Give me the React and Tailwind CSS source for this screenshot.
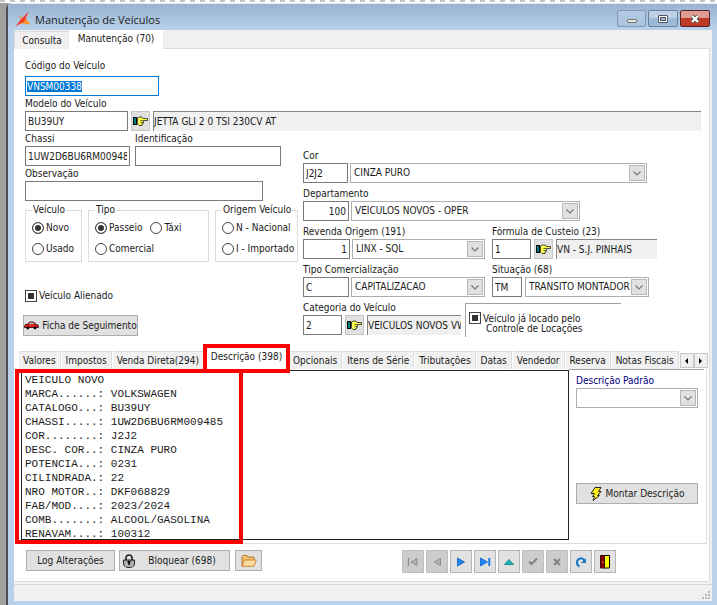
import React from 'react';

const notes = `VEICULO NOVO
MARCA......: VOLKSWAGEN
CATALOGO...: BU39UY
CHASSI.....: 1UW2D6BU6RM009485
COR........: J2J2
DESC. COR..: CINZA PURO
POTENCIA...: 0231
CILINDRADA.: 22
NRO MOTOR..: DKF068829
FAB/MOD....: 2023/2024
COMB.......: ALCOOL/GASOLINA
RENAVAM....: 100312`;

const tabs = [
  'Valores',
  'Impostos',
  'Venda Direta(294)',
  'Descrição (398)',
  'Opcionais',
  'Itens de Série',
  'Tributações',
  'Datas',
  'Vendedor',
  'Reserva',
  'Notas Fiscais',
];

function Field({ id, label, children, className = '' }) {
  return (
    <div className={className}>
      <label htmlFor={id} className="block h-[15px] leading-[15px] whitespace-nowrap">
        {label}
      </label>
      <div className="flex">{children}</div>
    </div>
  );
}

function TextBox({ id, label, className = '', ...props }) {
  return (
    <input
      id={id}
      aria-label={label}
      type="text"
      className={`h-5 shrink-0 border border-[#7a7a7a] bg-white px-0.5 outline-none ${className}`}
      {...props}
    />
  );
}

function ReadOnly({ label, value, className = '' }) {
  return (
    <input
      aria-label={label}
      readOnly
      defaultValue={value}
      className={`h-5 min-w-0 border-t border-l border-[#858585] bg-[#f0f0f0] outline-none ${className}`}
    />
  );
}

function Combo({ id, label, value, className = '' }) {
  return (
    <div className={`relative h-5 shrink-0 ${className}`}>
      <select
        id={id}
        aria-label={label}
        className="h-5 w-full appearance-none border border-[#adadb3] bg-white pr-4 pl-[3px] outline-none"
      >
        <option>{value}</option>
      </select>
      <span className="pointer-events-none absolute top-0.5 right-0.5 flex h-4 w-4 items-center justify-center border border-[#b8b8b8] bg-[#e1e1e1]">
        <svg width="8" height="5" viewBox="0 0 8 5" fill="none" stroke="#777" strokeWidth="1.2">
          <path d="M0.5 0.5 L4 4 L7.5 0.5" />
        </svg>
      </span>
    </div>
  );
}

function HandButton({ label }) {
  return (
    <button
      aria-label={label}
      className="mx-[3px] flex h-5 w-[19px] shrink-0 items-center justify-center border border-[#c4c4c4] bg-[#e1e1e1]"
    >
      <svg width="15" height="10" viewBox="0 0 15 10">
        <rect x="0" y="1" width="4" height="8" fill="#000" />
        <rect x="1" y="2" width="2" height="6" fill="#008080" />
        <path
          d="M4.5 2 L6.5 1 H9 L10 2.5 H14.5 V4.5 H10.5 V6.5 H10 V8 H9 V9.5 H6 L4.5 8 Z"
          fill="#ffff50"
          stroke="#222"
          strokeWidth="0.8"
        />
        <path d="M7.5 4.5 H10 M7.5 6.5 H10" stroke="#222" strokeWidth="0.7" />
      </svg>
    </button>
  );
}

function Radio({ name, label, checked }) {
  return (
    <label className="flex h-[15px] items-center gap-0.5 whitespace-nowrap">
      <input
        type="radio"
        name={name}
        defaultChecked={checked}
        className="h-3 w-3 shrink-0 appearance-none rounded-full border border-[#444] bg-white checked:bg-[#333] checked:shadow-[inset_0_0_0_2px_#fff]"
      />
      {label}
    </label>
  );
}

function Group({ title, className = '', children }) {
  return (
    <fieldset className={`h-[58px] min-w-0 shrink-0 border border-[#dcdcdc] pl-1.5 ${className}`}>
      <legend className="h-3 px-px leading-3 whitespace-nowrap">{title}</legend>
      <div className="mt-1 flex flex-col gap-1.5">{children}</div>
    </fieldset>
  );
}

function TriState({ id }) {
  return (
    <input
      id={id}
      type="checkbox"
      className="h-3 w-3 shrink-0 appearance-none border border-[#444] bg-[#333] shadow-[inset_0_0_0_2px_#fff]"
    />
  );
}

function NavButton({ label, disabled, children }) {
  return (
    <button
      aria-label={label}
      disabled={disabled}
      className="flex h-[23px] w-[22px] items-center justify-center border border-[#b5b5b5] bg-[#e1e1e1] disabled:border-[#c0c0c0] disabled:bg-[#cccccc]"
    >
      <svg width="14" height="14" viewBox="0 0 14 14" fill="none">
        {children}
      </svg>
    </button>
  );
}

function TitleBar() {
  return (
    <header className="flex h-[26px] items-start bg-linear-to-b from-[#98b4d2] to-[#b9d1ea] pl-[7px] text-[#1e1e1e]">
      <svg width="16" height="16" viewBox="0 0 16 16" className="mt-[7px]">
        <path d="M4 4 L8 7.5 L10.5 7 L15.5 13.5 L8.5 12.5 L4.5 12.5 L6 9 Z" fill="#ff9428" />
        <path d="M13.5 0.5 L9.5 10.5 L6.5 12 L0.5 15.5 L5 9.5 Z" fill="#f53a2c" />
      </svg>
      <h1 className="mt-2 ml-1 flex-1 font-['Open_Sans',sans-serif] text-[11px] leading-4">Manutenção de Veículos</h1>
      <div className="mt-[6px] mr-[7px] flex gap-0.5">
        <button
          aria-label="Minimizar"
          className="flex h-[17px] w-[29px] items-center justify-center rounded-xs border border-[#8097b5] bg-linear-to-b from-[#b5cae2] to-[#a9c3df]"
        >
          <span className="mt-1 h-1 w-2.5 rounded-[1px] border border-[#777] bg-[#e8e8e0]" />
        </button>
        <button
          aria-label="Maximizar"
          className="flex h-[17px] w-[30px] items-center justify-center rounded-xs border border-[#6b7f9c] bg-linear-to-b from-[#bfd1e6] from-50% to-[#9db9d8] to-50%"
        >
          <span className="flex h-2 w-2.5 items-center justify-center rounded-[1px] border border-[#555] bg-white">
            <span className="h-1 w-1.5 border border-[#556] bg-[#9bb4d4]" />
          </span>
        </button>
        <button
          aria-label="Fechar"
          className="flex h-[17px] w-[30px] items-center justify-center rounded-xs border border-[#5a1f2a] bg-linear-to-b from-[#e09d92] from-50% to-[#bd3a26] to-50%"
        >
          <svg width="12" height="10" viewBox="0 0 12 10">
            <path d="M3 2 L9 8 M9 2 L3 8" stroke="#555" strokeWidth="4" />
            <path d="M3 2 L9 8 M9 2 L3 8" stroke="#fff" strokeWidth="2.2" />
          </svg>
        </button>
      </div>
    </header>
  );
}

function VehicleForm() {
  return (
    <section className="pr-2 pl-[11px]">
      <div className="pt-[9px]">
        <label htmlFor="codigo" className="block h-[18px] leading-[15px]">
          Código do Veículo
        </label>
        <input
          id="codigo"
          autoFocus
          onFocus={(e) => e.target.select()}
          defaultValue="VNSM00338"
          className="block h-5 w-[134px] border border-[#0078d7] bg-white px-px outline-none selection:bg-[#0078d7] selection:text-white"
        />
      </div>
      <Field id="modelo" label="Modelo do Veículo">
        <TextBox id="modelo" defaultValue="BU39UY" className="w-[103px]" />
        <HandButton label="Buscar modelo" />
        <ReadOnly label="Descrição do modelo" value="JETTA GLI 2 0 TSI 230CV AT" className="flex-1" />
      </Field>

      <div className="flex">
        <div className="w-[278px] shrink-0">
          <div className="flex gap-[5px]">
            <Field id="chassi" label="Chassi">
              <TextBox id="chassi" defaultValue="1UW2D6BU6RM009485" className="w-[105px]" />
            </Field>
            <Field id="ident" label="Identificação">
              <TextBox id="ident" className="w-[146px]" />
            </Field>
          </div>
          <Field id="obs" label="Observação">
            <TextBox id="obs" className="w-[238px]" />
          </Field>

          <div className="mt-[3px] flex gap-1.5">
            <Group title="Veículo" className="w-[57px]">
              <Radio name="veiculo" label="Novo" checked />
              <Radio name="veiculo" label="Usado" />
            </Group>
            <Group title="Tipo" className="w-[121px]">
              <div className="flex gap-2">
                <Radio name="tipo" label="Passeio" checked />
                <Radio name="tipo" label="Táxi" />
              </div>
              <Radio name="tipo" label="Comercial" />
            </Group>
            <Group title="Origem Veículo" className="w-[83px]">
              <Radio name="origem" label="N - Nacional" />
              <Radio name="origem" label="I - Importado" />
            </Group>
          </div>

          <div className="mt-[26px] flex h-[15px] items-center gap-0.5">
            <TriState id="alienado" />
            <label htmlFor="alienado">Veículo Alienado</label>
          </div>
          <button className="mt-3 -ml-0.5 flex h-[21px] w-[115px] items-center justify-center gap-[3px] border border-[#adadad] bg-[#e1e1e1] whitespace-nowrap">
            <svg width="15" height="9" viewBox="0 0 15 9">
              <path d="M0.5 5 L1.5 3.5 L4 3 L5.5 1 H9.5 L11.5 3 L14 4 L14.5 6.5 H0.5 Z" fill="#e02020" stroke="#300" strokeWidth="0.8" />
              <path d="M5 3 L6 1.7 H9 L10.3 3 Z" fill="#8fe0e8" />
              <circle cx="3.8" cy="6.8" r="1.6" fill="#111" />
              <circle cx="11" cy="6.8" r="1.6" fill="#111" />
            </svg>
            Ficha de Seguimento
          </button>
        </div>

        <div className="flex flex-1 flex-col gap-[3px] pt-[17px]">
          <Field id="cor" label="Cor">
            <TextBox id="cor" defaultValue="J2J2" className="mr-0.5 w-[45px]" />
            <Combo label="Descrição da cor" value="CINZA PURO" className="w-[297px]" />
          </Field>
          <Field id="depto" label="Departamento">
            <TextBox id="depto" defaultValue="100" className="mr-0.5 w-[46px] text-right" />
            <Combo label="Nome do departamento" value="VEÍCULOS NOVOS - OPER" className="w-[229px]" />
          </Field>
          <div className="flex gap-[7px]">
            <Field id="revenda" label="Revenda Origem (191)">
              <TextBox id="revenda" defaultValue="1" className="mr-0.5 w-[47px] text-right" />
              <Combo label="Nome da revenda" value="LINX - SQL" className="w-[133px]" />
            </Field>
            <Field id="formula" label="Fórmula de Custeio (23)">
              <TextBox id="formula" defaultValue="1" className="w-[39px]" />
              <HandButton label="Buscar fórmula" />
              <ReadOnly label="Nome da fórmula" value="VN - S.J. PINHAIS" className="w-[101px]" />
            </Field>
          </div>
          <div className="flex gap-[7px]">
            <Field id="comerc" label="Tipo Comercialização">
              <TextBox id="comerc" defaultValue="C" className="mr-0.5 w-[46px]" />
              <Combo label="Nome da comercialização" value="CAPITALIZACAO" className="w-[134px]" />
            </Field>
            <Field id="situacao" label="Situação (68)">
              <TextBox id="situacao" defaultValue="TM" className="mr-[3px] w-[30px]" />
              <Combo label="Nome da situação" value="TRANSITO MONTADOR" className="w-[124px]" />
            </Field>
          </div>
          <div className="flex gap-1">
            <Field id="categoria" label="Categoria do Veículo">
              <TextBox id="categoria" defaultValue="2" className="w-[39px]" />
              <HandButton label="Buscar categoria" />
              <ReadOnly label="Nome da categoria" value="VEICULOS NOVOS VW" className="w-[94px]" />
            </Field>
            <div className="mt-[3px] flex h-[34px] w-[156px] gap-0.5 border-t border-l border-[#a0a0a0] pt-2 pl-[3px]">
              <TriState id="locado" />
              <label htmlFor="locado" className="pt-0.5 leading-[10px] whitespace-nowrap">
                Veículo já locado pelo
                <span className="block pl-[3px]">Controle de Locações</span>
              </label>
            </div>
          </div>
        </div>
      </div>
    </section>
  );
}

function DetailTabs() {
  return (
    <section className="mt-[11px] pr-0.5 pl-[5px]">
      <div className="flex h-[21px] items-end gap-px" role="tablist">
        {tabs.map((tab) =>
          tab === 'Descrição (398)' ? (
            <button key={tab} role="tab" aria-selected="true" className="relative h-[21px] w-[83px] shrink-0 bg-white pb-1 whitespace-nowrap">
              {tab}
              <span className="pointer-events-none absolute -inset-x-0.5 -top-1 -bottom-1 z-20 border-4 border-[#ff0000]" />
            </button>
          ) : (
            <button
              key={tab}
              role="tab"
              className="h-[18px] shrink-0 border-t border-r border-[#dcdcdc] bg-[#f0f0f0] px-1 whitespace-nowrap"
            >
              {tab}
            </button>
          ),
        )}
        <div className="mb-px ml-auto flex">
          {['M5 1 L2 4 L5 7 Z', 'M2 1 L5 4 L2 7 Z'].map((d, i) => (
            <button
              key={d}
              aria-label={i ? 'Próxima aba' : 'Aba anterior'}
              className="flex h-[15px] w-[14px] items-center justify-center border border-[#c8c8c8] bg-[#f0f0f0]"
            >
              <svg width="7" height="8" viewBox="0 0 7 8">
                <path d={d} fill="#000" />
              </svg>
            </button>
          ))}
        </div>
      </div>

      <div className="relative flex border-r border-b border-[#dcdcdc] pr-0.5 pb-[3px] pl-0.5">
        <textarea
          aria-label="Descrição do veículo"
          defaultValue={notes}
          className="mt-px h-[170px] min-w-0 flex-1 resize-none overflow-hidden border border-[#222] bg-white pt-0.5 pl-[3px] font-['Liberation_Mono',monospace] text-[11px] leading-[14px] outline-none"
        />
        <span className="pointer-events-none absolute top-0 -left-1 z-10 h-[175px] w-[228px] border-4 border-[#ff0000]" />
        <div className="w-[135px] shrink-0 border-t border-[#a0a0a0] pt-[3px] pr-1.5 pl-[7px]">
          <label htmlFor="padrao" className="block h-[15px] leading-[15px] text-[#000080]">
            Descrição Padrão
          </label>
          <Combo id="padrao" value="" className="w-full" />
          <button className="mt-[75px] flex h-[21px] w-full items-center justify-center gap-1 border border-[#adadad] bg-[#e1e1e1] whitespace-nowrap">
            <svg width="12" height="14" viewBox="0 0 12 14">
              <path
                d="M5 0.5 H11 L8.5 4.5 H11 L7.5 8.5 H9.5 L3 13.5 L4.5 9.5 H2.5 L4.5 6.5 H1 Z"
                fill="#ffee20"
                stroke="#222"
                strokeWidth="1"
              />
            </svg>
            Montar Descrição
          </button>
        </div>
      </div>
    </section>
  );
}

function ActionBar() {
  return (
    <section className="flex items-start pt-[6px] pr-[93px] pb-2 pl-3">
      <button className="h-[21px] w-[89px] border border-[#adadad] bg-[#e1e1e1]">Log Alterações</button>
      <button className="ml-1 flex h-[21px] w-[111px] items-center border border-[#adadad] bg-[#e1e1e1] pl-[3px]">
        <svg width="12" height="14" viewBox="0 0 12 14">
          <path d="M3 6 V4 A3 3 0 0 1 9 4 V6" fill="none" stroke="#222" strokeWidth="1.6" />
          <path d="M0.5 6 H11.5 V10 C11.5 12 9 13.5 6 13.5 C3 13.5 0.5 12 0.5 10 Z" fill="#888" stroke="#222" />
          <path d="M1 8 H11 M1 10 H11 M2 12 H10" stroke="#eee" strokeWidth="0.8" />
          <path d="M6 7 V11 M4.5 8 H7.5" stroke="#000" strokeWidth="1.5" />
        </svg>
        <span className="flex-1 text-center whitespace-nowrap">Bloquear (698)</span>
      </button>
      <button
        aria-label="Abrir pasta"
        className="ml-[5px] flex h-[21px] w-[27px] items-center justify-center border border-[#adadad] bg-[#e1e1e1]"
      >
        <svg width="16" height="12" viewBox="0 0 16 12">
          <path d="M1 11 V1.5 L2 0.5 H6 L7 2 H13 V5" fill="#f0c070" stroke="#b87830" />
          <path d="M1 11.3 L3.5 5 H15.3 L13 11.3 Z" fill="#fbdc9a" stroke="#c88840" />
        </svg>
      </button>

      <div className="ml-auto flex gap-0.5">
        <NavButton label="Primeiro" disabled>
          <path d="M2.5 3 V11" stroke="#8c8c8c" strokeWidth="1.4" />
          <path d="M11 3.5 L5 7 L11 10.5 Z" fill="#b4b4b4" stroke="#8c8c8c" />
        </NavButton>
        <NavButton label="Anterior" disabled>
          <path d="M10.5 3.5 L4.5 7 L10.5 10.5 Z" fill="#b4b4b4" stroke="#8c8c8c" />
        </NavButton>
        <NavButton label="Próximo">
          <path d="M3.5 3 L10.5 7 L3.5 11 Z" fill="#1e88f0" stroke="#0a5fc8" strokeWidth="0.8" />
        </NavButton>
        <NavButton label="Último">
          <path d="M2.5 3 L9.5 7 L2.5 11 Z" fill="#1e88f0" stroke="#0a5fc8" strokeWidth="0.8" />
          <path d="M11.3 3 V11" stroke="#0a6fe0" strokeWidth="1.8" />
        </NavButton>
        <NavButton label="Editar">
          <path d="M2.5 9.5 L7 4.5 L11.5 9.5 Z" fill="#18b8c0" stroke="#087880" strokeWidth="0.8" />
        </NavButton>
        <NavButton label="Confirmar" disabled>
          <path d="M3 6.5 L5.5 9 L11 3.5" stroke="#808080" strokeWidth="2" />
        </NavButton>
        <NavButton label="Cancelar" disabled>
          <path d="M4 4 L10 10 M10 4 L4 10" stroke="#808080" strokeWidth="2" />
        </NavButton>
        <NavButton label="Atualizar">
          <path d="M5.5 11.5 C2 10 2 4.5 6 3.5 C8 3 9.5 4 10.5 5.5" stroke="#1878c8" strokeWidth="2" />
          <path d="M12 3 V8 H7 Z" fill="#1878c8" />
        </NavButton>
        <NavButton label="Sair">
          <path d="M2.5 0.5 H11.5 V13 H2.5 Z" fill="#ffff00" stroke="#000" />
          <path d="M2.5 0.5 H6.5 V13 H2.5 Z" fill="#800000" />
          <path d="M6.5 1 V13" stroke="#000" strokeWidth="0.8" />
          <path d="M5 6.5 V8" stroke="#ff0" strokeWidth="0.8" />
        </NavButton>
      </div>
    </section>
  );
}

export default function App() {
  return (
    <div className="flex min-h-screen flex-col bg-[#a0a0a0] font-['DejaVu_Sans_Condensed',Tahoma,'Noto_Sans',sans-serif] text-[10px] leading-3 text-[#1a1a1a]">
      <div className="h-[3px] shrink-0 bg-white bg-[repeating-linear-gradient(90deg,#c4c4c4_0_5px,#fff_5px_10px)] bg-size-[100%_2px] bg-no-repeat" />
      <div className="ml-1.5 flex flex-1 flex-col rounded-tl-md border-t border-l-2 border-t-[#e8eef5] border-l-[#4a5058] bg-[#b9d1ea]">
        <TitleBar />
        <main className="mr-[5px] ml-1.5 flex flex-1 flex-col bg-[#f0f0f0]">
          <div className="flex h-[19px] items-end" role="tablist">
            <button role="tab" className="h-[18px] w-[55px] border-t border-l border-[#dcdcdc] bg-[#f0f0f0] whitespace-nowrap">
              Consulta
            </button>
            <button role="tab" aria-selected="true" className="h-[19px] w-[94px] bg-white pb-0.5 whitespace-nowrap">
              Manutenção (70)
            </button>
            <div className="mr-0.5 flex-1 border-b border-[#dcdcdc]" />
          </div>
          <div className="mr-0.5 flex-1 border-r border-b border-[#dcdcdc] bg-white">
            <VehicleForm />
            <DetailTabs />
            <ActionBar />
          </div>
          <footer className="mt-0.5 flex h-[17px] shrink-0 items-end justify-end border-t border-[#d7d7d7] pr-0.5 pb-0.5">
            <svg width="8" height="8" viewBox="0 0 8 8" fill="#b8b8b8">
              <path d="M6 0h2v2H6z M3 3h2v2H3z M6 3h2v2H6z M0 6h2v2H0z M3 6h2v2H3z M6 6h2v2H6z" />
            </svg>
          </footer>
        </main>
        <div className="h-[5px] shrink-0" />
      </div>
    </div>
  );
}
